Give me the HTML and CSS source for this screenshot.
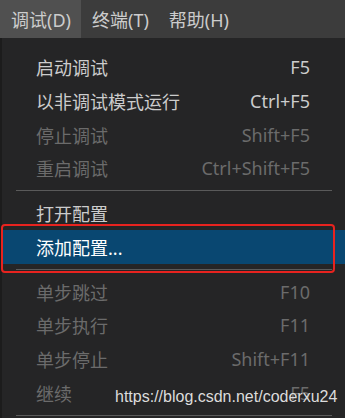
FILE: index.html
```html
<!DOCTYPE html>
<html lang="zh-CN">
<head>
<meta charset="utf-8">
<link rel="stylesheet" href="styles.css">
</head>
<body>
<div class="app">
  <div class="menubar">
    <div class="mb-item active">调试(D)</div>
    <div class="mb-item">终端(T)</div>
    <div class="mb-item">帮助(H)</div>
  </div>
  <div class="body">
    <div class="edge"></div>
    <div class="menu">
      <div class="row"><span class="label">启动调试</span><span class="key">F5</span></div>
      <div class="row"><span class="label">以非调试模式运行</span><span class="key">Ctrl+F5</span></div>
      <div class="row disabled"><span class="label">停止调试</span><span class="key">Shift+F5</span></div>
      <div class="row disabled"><span class="label">重启调试</span><span class="key">Ctrl+Shift+F5</span></div>
      <div class="sep"></div>
      <div class="row"><span class="label">打开配置</span><span class="key"></span></div>
      <div class="row selected"><span class="label">添加配置...</span><span class="key"></span></div>
      <div class="sep"></div>
      <div class="row disabled"><span class="label">单步跳过</span><span class="key">F10</span></div>
      <div class="row disabled"><span class="label">单步执行</span><span class="key">F11</span></div>
      <div class="row disabled"><span class="label">单步停止</span><span class="key">Shift+F11</span></div>
      <div class="row disabled"><span class="label">继续</span><span class="key">F5</span></div>
      <div class="sep"></div>
    </div>
  </div>
  <div class="mark"></div>
  <div class="watermark">https://blog.csdn.net/coderxu24</div>
</div>
</body>
</html>
```
FILE: styles.css
```css
html, body {
  margin: 0;
  padding: 0;
  background: #252526;
}
.app {
  position: relative;
  width: 345px;
  height: 418px;
  overflow: hidden;
  font-family: "Noto Sans", "Noto Sans CJK SC", sans-serif;
  font-size: 18px;
}
.menubar {
  display: flex;
  height: 38px;
  background: #3c3c3c;
  color: #cccccc;
}
.mb-item {
  display: flex;
  align-items: center;
  padding: 0 9px 0 11px;
}
.mb-item.active {
  background: #505050;
  width: 61px;
  padding-left: 11px;
}
.body {
  display: flex;
  height: 380px;
}
.edge {
  width: 2px;
  background: #1c1c1c;
  flex: none;
}
.menu {
  flex: 1;
  padding-top: 12.6px;
  background: #252526;
}
.row {
  display: flex;
  align-items: center;
  justify-content: space-between;
  height: 33.6px;
  padding: 0 35px 0 34px;
  color: #cccccc;
}
.row.disabled {
  color: #6b6b6b;
}
.row.selected {
  background: #094771;
  color: #ffffff;
}
.sep {
  height: 11.4px;
  display: flex;
  align-items: center;
  padding: 0 13px 0 14px;
}
.sep::before {
  content: "";
  display: block;
  flex: 1;
  height: 1px;
  background: #5a5a5a;
}
.mark {
  position: absolute;
  left: 1px;
  top: 224px;
  width: 330px;
  height: 45px;
  border: 2px solid #e8231f;
  border-radius: 4px;
}
.watermark {
  position: absolute;
  left: 115px;
  top: 388px;
  font-family: "Liberation Sans", Arial, sans-serif;
  font-size: 16px;
  line-height: 18px;
  color: #dcdcdc;
}
```
